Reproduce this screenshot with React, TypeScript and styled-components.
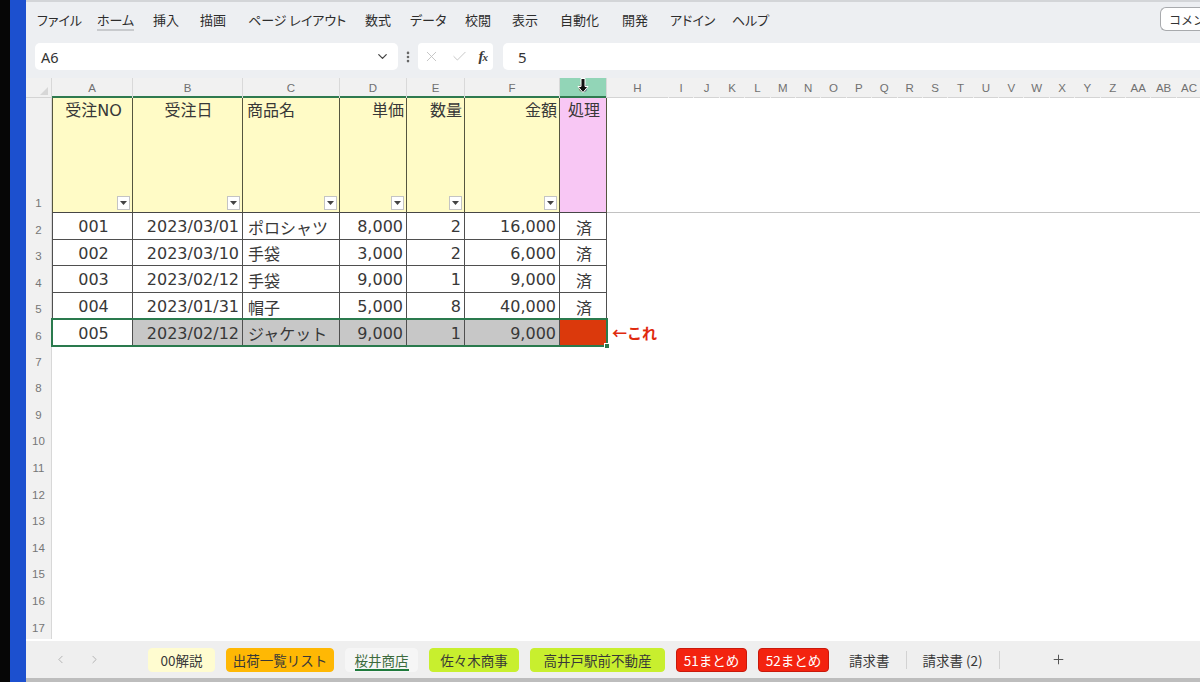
import React from 'react';
import styled, { createGlobalStyle } from 'styled-components';
import { ChevronDown, ChevronLeft, ChevronRight, X, Check, Plus, EllipsisVertical } from 'lucide-react';

const GlobalStyle = createGlobalStyle`
  html, body { margin: 0; padding: 0; overflow: hidden; background: #060606; }
  * { box-sizing: border-box; }
`;

const JP = `'Noto Sans CJK JP', 'Noto Sans', sans-serif`;
const CELL_FONT = `'DejaVu Sans', 'Noto Sans CJK JP', sans-serif`;
const HEAD_FONT = `'Liberation Sans', 'Noto Sans', sans-serif`;

const Screen = styled.div`
  display: flex;
  width: 1200px;
  height: 682px;
  overflow: hidden;
  background: #060606;
  border-left: 10px solid #060606;
`;

const BlueEdge = styled.div`
  width: 16px;
  flex: none;
  background: #1c50cf;
`;

const Window = styled.div`
  flex: 1;
  min-width: 0;
  display: flex;
  flex-direction: column;
  background: #edeff2;
  border-top: 2px solid #d3d5d8;
  border-bottom: 4px solid #bdbdbd;
  font-family: ${JP};
`;

const MenuBar = styled.div`
  height: 34px;
  flex: none;
  display: flex;
  align-items: center;
  padding-left: 11px;
`;

const MenuItem = styled.span<{ $w: number; $current?: boolean }>`
  width: ${p => p.$w}px;
  flex: none;
  font-size: 13px;
  color: #2d2d2d;
  font-feature-settings: 'palt';
  line-height: 18px;
  padding-top: 2px;

  span {
    border-bottom: 2px solid ${p => (p.$current ? '#c8cacd' : 'transparent')};
  }
`;

const CommentBtn = styled.div`
  margin-left: auto;
  width: 40px;
  height: 24px;
  display: flex;
  align-items: center;
  gap: 2px;
  padding-left: 6px;
  background: #fff;
  border: 1px solid #a8aaad;
  border-right: none;
  border-radius: 6px 0 0 6px;
  overflow: hidden;
  white-space: nowrap;
  font-size: 12px;
  color: #333;
`;

const FormulaBar = styled.div`
  height: 42px;
  flex: none;
  display: flex;
  align-items: flex-start;
  padding: 7px 0 0 9px;
`;

const NameBox = styled.div`
  width: 363px;
  height: 27px;
  flex: none;
  display: flex;
  align-items: center;
  justify-content: space-between;
  padding: 0 8px 0 6px;
  background: #fff;
  border-radius: 5px;
  font-family: 'Noto Sans', sans-serif;
  font-size: 14.5px;
  color: #333;
`;

const Grip = styled.div`
  width: 20px;
  height: 27px;
  flex: none;
  display: flex;
  align-items: center;
  justify-content: center;
  color: #666;
`;

const FxBox = styled.div`
  width: 75px;
  height: 27px;
  flex: none;
  display: flex;
  align-items: center;
  justify-content: space-between;
  padding: 0 6px 0 5px;
  background: #fff;
  border-radius: 4px;
  color: #bdbdbd;
`;

const Fx = styled.span`
  font-family: 'Liberation Serif', serif;
  font-style: italic;
  font-weight: bold;
  font-size: 15px;
  color: #3a3a3a;
  letter-spacing: -1px;

  small {
    font-size: 11px;
  }
`;

const FormulaInput = styled.div`
  flex: 1;
  height: 27px;
  margin-left: 10px;
  display: flex;
  align-items: center;
  padding-left: 15px;
  background: #fff;
  border-radius: 5px 0 0 5px;
  font-family: 'Noto Sans', sans-serif;
  font-size: 15px;
  color: #333;
`;

const Sheet = styled.div`
  flex: 1;
  min-height: 0;
  display: flex;
  flex-direction: column;
  background: #fff;
  overflow: hidden;
`;

const Row = styled.div<{ $h: number }>`
  display: flex;
  flex: none;
  height: ${p => p.$h}px;
`;

const Corner = styled.div`
  width: 26px;
  flex: none;
  display: flex;
  align-items: flex-end;
  justify-content: flex-end;
  padding: 3px;
  background: #f1f1f1;
  border-right: 1px solid #d8d8d8;
  box-shadow: inset 0 -1px 0 #d4d4d4;
`;

const CornerMark = styled.div`
  width: 0;
  height: 0;
  border-left: 8px solid transparent;
  border-bottom: 8px solid #d7d7d7;
`;

const ColHead = styled.div<{ $w: number; $sel?: boolean; $active?: boolean }>`
  width: ${p => p.$w}px;
  flex: none;
  position: relative;
  display: flex;
  align-items: center;
  justify-content: center;
  font-family: ${HEAD_FONT};
  font-size: 11.5px;
  color: #707070;
  background: ${p => (p.$active ? '#92d5b7' : '#f1f1f1')};
  border-right: 1px solid ${p => (p.$sel ? '#d9d9d9' : '#f1f1f1')};
  box-shadow: ${p => (p.$sel ? 'inset 0 -2px 0 #2f7a4f' : 'inset 0 -1px 0 #d4d4d4')};
`;

const Cursor = styled.svg`
  position: absolute;
  top: 0;
  left: 50%;
  transform: translateX(-50%);
`;

const RowNum = styled.div<{ $pb: number }>`
  width: 26px;
  flex: none;
  display: flex;
  align-items: flex-end;
  justify-content: center;
  padding-bottom: ${p => p.$pb}px;
  background: #f1f1f1;
  border-right: 1px solid #d8d8d8;
  font-family: ${HEAD_FONT};
  font-size: 11.5px;
  color: #767676;
`;

const TitleCell = styled.div<{ $w: number; $bg: string; $align: string; $first?: boolean }>`
  width: ${p => p.$w}px;
  flex: none;
  display: flex;
  flex-direction: column;
  justify-content: space-between;
  padding: 3px 2px 2px 4px;
  background: ${p => p.$bg};
  border-right: 1px solid #55553f;
  border-bottom: 1px solid #464646;
  border-left: ${p => (p.$first ? '1px solid #55553f' : 'none')};
  font-family: ${CELL_FONT};
  font-size: 16px;
  line-height: 20px;
  color: #383838;
  text-align: ${p => p.$align};
`;

const FilterBtn = styled.div`
  align-self: flex-end;
  width: 13px;
  height: 14px;
  display: flex;
  align-items: center;
  justify-content: center;
  background: #fff;
  border: 1px solid #c4c4c4;
`;

const Cell = styled.div<{ $w: number; $align: string; $bg?: string; $first?: boolean }>`
  width: ${p => p.$w}px;
  flex: none;
  display: flex;
  align-items: center;
  justify-content: ${p => (p.$align === 'left' ? 'flex-start' : p.$align === 'right' ? 'flex-end' : 'center')};
  padding: 2px 3px 0 5px;
  background: ${p => p.$bg || '#fff'};
  border-right: 1px solid #4f4f4f;
  border-bottom: 1px solid #4f4f4f;
  border-left: ${p => (p.$first ? '1px solid #4f4f4f' : 'none')};
  font-family: ${CELL_FONT};
  font-size: 16px;
  color: #383838;
  white-space: nowrap;
  overflow: hidden;
`;

const Rest = styled.div<{ $frozen?: boolean }>`
  flex: 1;
  border-bottom: ${p => (p.$frozen ? '1px solid #c2c2c2' : 'none')};
`;

const Selection = styled.div`
  display: flex;
  flex: none;
  position: relative;
  outline: 2px solid #2a7a4d;
  outline-offset: -1px;
  z-index: 1;
`;

const Handle = styled.div`
  position: absolute;
  right: -3px;
  bottom: -3px;
  width: 6px;
  height: 6px;
  background: #2a7a4d;
  border: 1px solid #fff;
`;

const Note = styled.div`
  flex: 1;
  display: flex;
  align-items: center;
  padding: 0 0 0 5px;
  color: #df2a0e;
  font-weight: bold;
  font-size: 15px;
`;

const TabBar = styled.div`
  height: 37px;
  flex: none;
  display: flex;
  align-items: center;
  padding-left: 28px;
  background: #efefef;
`;

const Nav = styled.div`
  width: 94px;
  flex: none;
  display: flex;
  align-items: center;
  gap: 21px;
  color: #aaa;
`;

const Tabs = styled.div`
  display: flex;
  align-items: center;
  gap: 11px;
`;

const Tab = styled.div<{ $w?: number; $bg?: string; $fg?: string; $border?: string; $ml?: number }>`
  ${p => (p.$w ? `width: ${p.$w}px;` : 'padding: 0 4px;')}
  margin-left: ${p => p.$ml || 0}px;
  height: 24px;
  flex: none;
  display: flex;
  align-items: center;
  justify-content: center;
  border-radius: 4px;
  background: ${p => p.$bg || 'transparent'};
  border: 1px solid ${p => p.$border || p.$bg || 'transparent'};
  color: ${p => p.$fg || '#383838'};
  font-size: 13.5px;
  white-space: nowrap;
`;

const TabLabel = styled.span<{ $underline?: boolean }>`
  line-height: 18px;
  padding-top: ${p => (p.$underline ? '3px' : '0')};
  border-bottom: ${p => (p.$underline ? '2px solid #1f7a3c' : 'none')};
`;

const TabSep = styled.div`
  width: 1px;
  height: 18px;
  flex: none;
  background: #d2d2d2;
`;

const AddSheet = styled.div`
  margin-left: 51px;
  display: flex;
  align-items: center;
  color: #555;
`;

const MENU = [
  { label: 'ファイル', w: 60 },
  { label: 'ホーム', w: 56 },
  { label: '挿入', w: 47 },
  { label: '描画', w: 48 },
  { label: 'ページ レイアウト', w: 117 },
  { label: '数式', w: 45 },
  { label: 'データ', w: 55 },
  { label: '校閲', w: 47 },
  { label: '表示', w: 48 },
  { label: '自動化', w: 62 },
  { label: '開発', w: 48 },
  { label: 'アドイン', w: 62 },
  { label: 'ヘルプ', w: 50 },
];

const TABLE_COLS = [81, 110, 97, 67, 58, 95, 47];
const LETTERS = ['A', 'B', 'C', 'D', 'E', 'F', 'G'];
const OTHER_COLS = [{ key: 'H', w: 62 }].concat(
  'IJKLMNOPQRSTUVWXYZ'.split('').concat(['AA', 'AB', 'AC']).map(k => ({ key: k, w: 25.4 }))
);

const TITLES = [
  { text: '受注NO', align: 'center' },
  { text: '受注日', align: 'center' },
  { text: '商品名', align: 'left' },
  { text: '単価', align: 'right' },
  { text: '数量', align: 'right' },
  { text: '金額', align: 'right' },
  { text: '処理', align: 'center' },
];

const ALIGNS = ['center', 'right', 'left', 'right', 'right', 'right', 'center'];

const DATA = [
  ['001', '2023/03/01', 'ポロシャツ', '8,000', '2', '16,000', '済'],
  ['002', '2023/03/10', '手袋', '3,000', '2', '6,000', '済'],
  ['003', '2023/02/12', '手袋', '9,000', '1', '9,000', '済'],
  ['004', '2023/01/31', '帽子', '5,000', '8', '40,000', '済'],
];

const LAST = ['005', '2023/02/12', 'ジャケット', '9,000', '1', '9,000', ''];

const ROW_H = 26.6;

const SHEETS = [
  { name: '00解説', w: 67, bg: '#fffcd0' },
  { name: '出荷一覧リスト', w: 108, bg: '#ffb804' },
  { name: '桜井商店', w: 73, bg: '#f6f6f6', fg: '#3d6b3d', active: true },
  { name: '佐々木商事', w: 90, bg: '#c8ef2e' },
  { name: '高井戸駅前不動産', w: 135, bg: '#c8ef2e' },
  { name: '51まとめ', w: 71, bg: '#f3230f', fg: '#fff', border: '#c9190b' },
  { name: '52まとめ', w: 71, bg: '#f3230f', fg: '#fff', border: '#c9190b' },
];

const Filter = () => (
  <FilterBtn>
    <svg width="7" height="4" viewBox="0 0 7 4">
      <path d="M0 0h7L3.5 4z" fill="#444" />
    </svg>
  </FilterBtn>
);

const App: React.FC = () => {
  const lastCellBg = (i: number) => (i === 0 ? '#fff' : i === 6 ? '#db390c' : '#c7c7c7');

  return (
    <>
      <GlobalStyle />
      <Screen>
        <BlueEdge />
        <Window>
          <MenuBar>
            {MENU.map(m => (
              <MenuItem key={m.label} $w={m.w} $current={m.label === 'ホーム'}>
                <span>{m.label}</span>
              </MenuItem>
            ))}
            <CommentBtn>
              <svg width="13" height="12" viewBox="0 0 13 12" fill="none" stroke="#333" strokeWidth="1.3">
                <path d="M1.5 1.5h10v6.5h-6l-3 2.5v-2.5h-1z" />
              </svg>
              コメント
            </CommentBtn>
          </MenuBar>

          <FormulaBar>
            <NameBox>
              A6
              <ChevronDown size={15} strokeWidth={2} color="#444" />
            </NameBox>
            <Grip>
              <EllipsisVertical size={14} strokeWidth={2.5} />
            </Grip>
            <FxBox>
              <X size={17} strokeWidth={1.2} />
              <Check size={17} strokeWidth={1.2} />
              <Fx>f<small>x</small></Fx>
            </FxBox>
            <FormulaInput>5</FormulaInput>
          </FormulaBar>

          <Sheet>
            <Row $h={20}>
              <Corner>
                <CornerMark />
              </Corner>
              {LETTERS.map((k, i) => (
                <ColHead key={k} $w={TABLE_COLS[i]} $sel $active={k === 'G'}>
                  {k}
                  {k === 'G' && (
                    <Cursor width="12" height="15" viewBox="0 0 12 15">
                      <path d="M4 0.5h4v8h3l-5 6-5-6h3z" fill="#111" stroke="#fff" strokeWidth="1" />
                    </Cursor>
                  )}
                </ColHead>
              ))}
              {OTHER_COLS.map(c => (
                <ColHead key={c.key} $w={c.w}>{c.key}</ColHead>
              ))}
            </Row>

            <Row $h={115}>
              <RowNum $pb={4}>1</RowNum>
              {TITLES.map((t, i) => (
                <TitleCell
                  key={t.text}
                  $w={TABLE_COLS[i]}
                  $bg={i === 6 ? '#f8c7f4' : '#fffbc6'}
                  $align={t.align}
                  $first={i === 0}
                >
                  <span>{t.text}</span>
                  {i < 6 ? <Filter /> : <span />}
                </TitleCell>
              ))}
              <Rest $frozen />
            </Row>

            {DATA.map((r, ri) => (
              <Row key={ri} $h={ROW_H}>
                <RowNum $pb={4}>{ri + 2}</RowNum>
                {r.map((v, i) => (
                  <Cell key={i} $w={TABLE_COLS[i]} $align={ALIGNS[i]} $first={i === 0}>{v}</Cell>
                ))}
                <Rest />
              </Row>
            ))}

            <Row $h={ROW_H}>
              <RowNum $pb={4}>6</RowNum>
              <Selection>
                {LAST.map((v, i) => (
                  <Cell key={i} $w={TABLE_COLS[i]} $align={ALIGNS[i]} $bg={lastCellBg(i)} $first={i === 0}>{v}</Cell>
                ))}
                <Handle />
              </Selection>
              <Note>←これ</Note>
            </Row>

            {Array.from({ length: 11 }, (_, i) => (
              <Row key={i} $h={ROW_H}>
                <RowNum $pb={5}>{i + 7}</RowNum>
                <Rest />
              </Row>
            ))}
          </Sheet>

          <TabBar>
            <Nav>
              <ChevronLeft size={13} strokeWidth={1.6} />
              <ChevronRight size={13} strokeWidth={1.6} />
            </Nav>
            <Tabs>
              {SHEETS.map(s => (
                <Tab key={s.name} $w={s.w} $bg={s.bg} $fg={s.fg} $border={s.border}>
                  <TabLabel $underline={s.active}>{s.name}</TabLabel>
                </Tab>
              ))}
              <Tab $ml={4}>請求書</Tab>
              <TabSep />
              <Tab>請求書 (2)</Tab>
              <TabSep />
            </Tabs>
            <AddSheet>
              <Plus size={15} strokeWidth={1.6} />
            </AddSheet>
          </TabBar>
        </Window>
      </Screen>
    </>
  );
};

export default App;
